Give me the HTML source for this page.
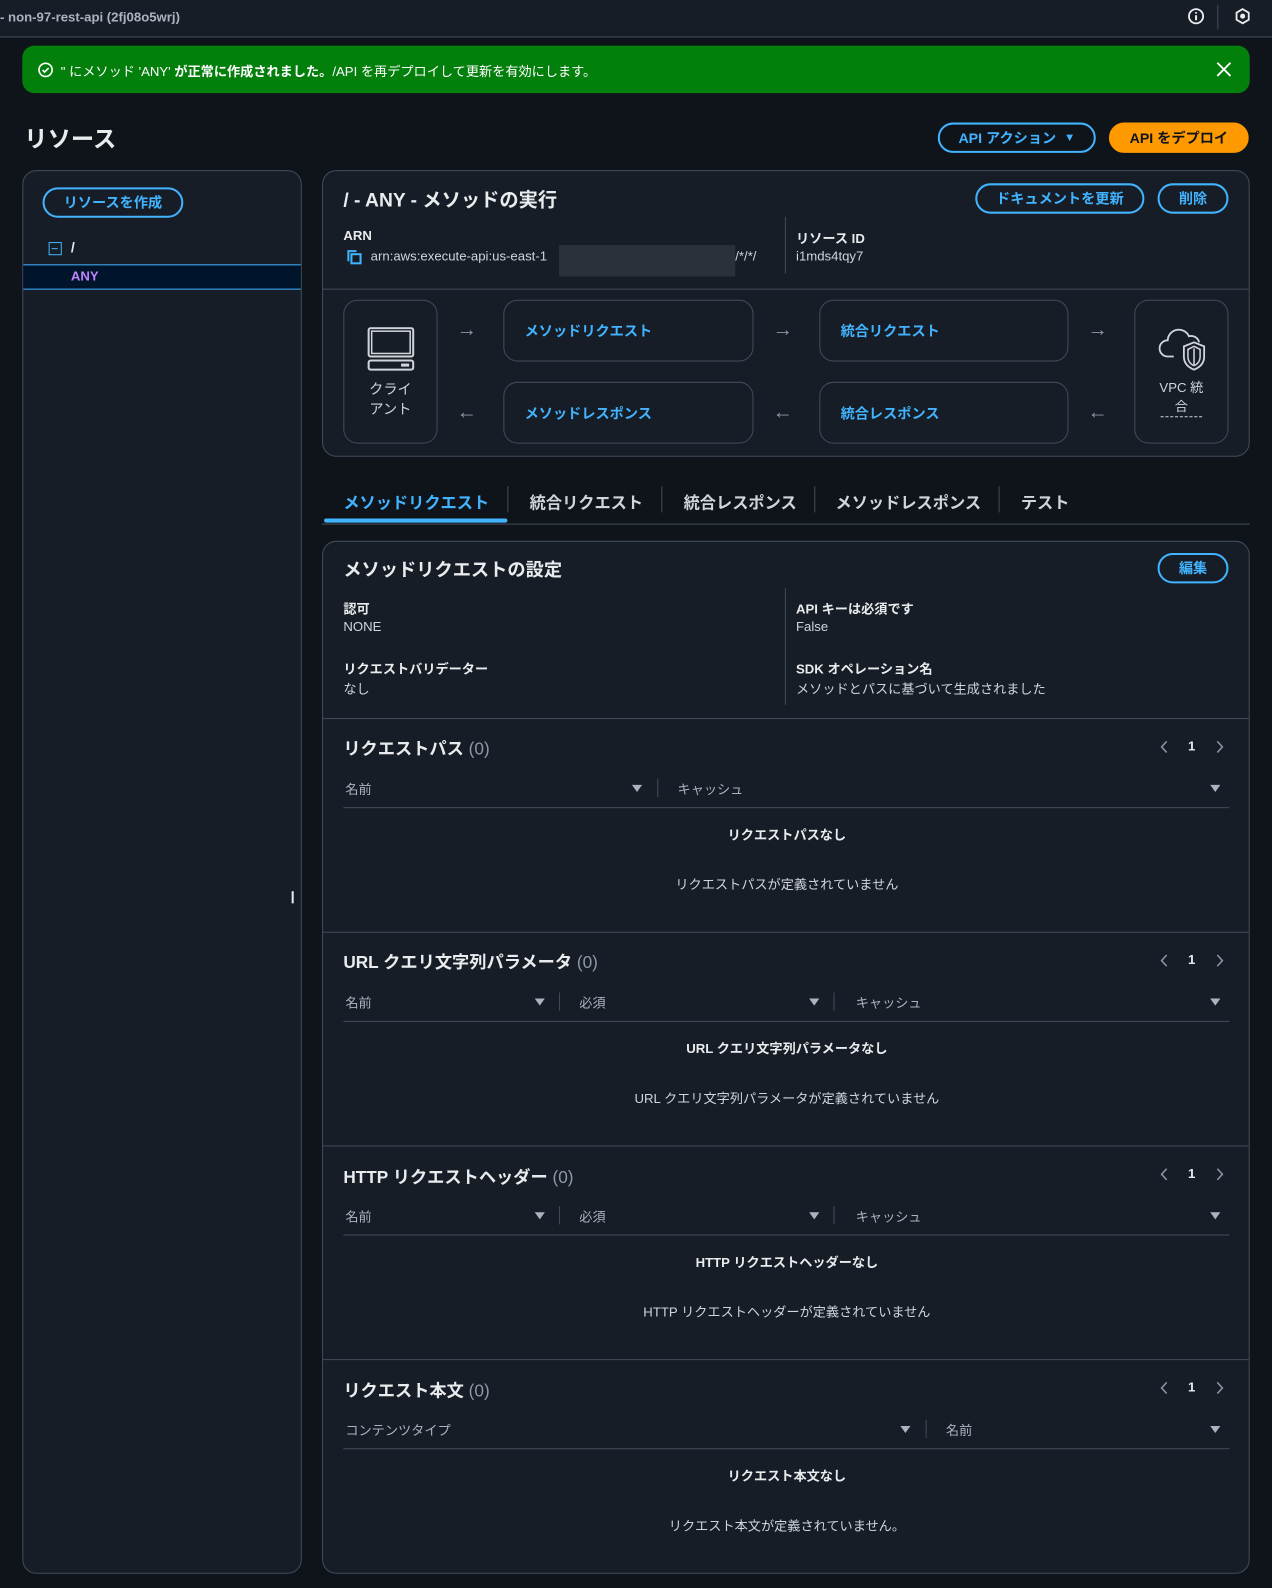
<!DOCTYPE html>
<html><head><meta charset="utf-8"><style>
*{box-sizing:border-box;margin:0;padding:0}
html,body{width:1272px;height:1588px;overflow:hidden;background:#0f141a}
body{font-family:"Liberation Sans","Noto Sans CJK JP",sans-serif;color:#e9ebed}
#w{position:absolute;left:0;top:0;width:1256px;height:1568px;transform:scale(1.01274);transform-origin:0 0}
.a{position:absolute}
.box{position:absolute;border:1px solid #414d5c;border-radius:14px;background:#161d26}
.btn{position:absolute;border:2px solid #42b4ff;border-radius:16px;color:#42b4ff;font-weight:bold;font-size:14px;display:flex;align-items:center;justify-content:center}
.lbl{font-size:13px;font-weight:bold;color:#e9ebed}
.val{font-size:13px;color:#d1d5db}
.fb{position:absolute;border:1px solid #414d5c;border-radius:14px;display:flex;align-items:center;padding-left:20px;color:#42b4ff;font-weight:bold;font-size:14px}
.arr{position:absolute;color:#8d99a8;font-size:20px;line-height:20px}
.h2{position:absolute;font-size:17px;font-weight:bold}
.h2 span{color:#8d99a8;font-weight:normal}
.th{position:absolute;font-size:13px;color:#aab4c0}
.tri{position:absolute;width:0;height:0;border-left:5px solid transparent;border-right:5px solid transparent;border-top:7px solid #aab4c0}
.sep{position:absolute;width:1px;height:18px;background:#414d5c}
.hl{position:absolute;height:1px;background:#414d5c}
.ct{position:absolute;left:0;width:916px;text-align:center;font-size:13px}
.pn{position:absolute;font-size:13px;font-weight:bold}
</style></head><body><div id="w">
<div class="a" style="left:0;top:0;width:1256px;height:37px;background:#161d26;border-bottom:1px solid #414d5c"></div>
<div class="a" style="left:0;top:9px;font-size:13px;font-weight:bold;color:#aab4c0">- non-97-rest-api (2fj08o5wrj)</div>
<svg class="a" style="left:1172px;top:7px" width="18" height="18" viewBox="0 0 18 18"><circle cx="9" cy="9" r="7" fill="none" stroke="#e9ebed" stroke-width="1.8"/><path d="M9 8v5M9 5v1.5" stroke="#e9ebed" stroke-width="2"/></svg>
<div class="a" style="left:1202px;top:5px;width:1px;height:24px;background:#414d5c"></div>
<svg class="a" style="left:1218px;top:7px" width="18" height="18" viewBox="0 0 18 18"><path d="M9 2l6 3.5v7L9 16l-6-3.5v-7z" fill="none" stroke="#e9ebed" stroke-width="1.8"/><circle cx="9" cy="9" r="2.5" fill="#e9ebed"/></svg>
<div class="a" style="left:22px;top:45px;width:1212px;height:47px;background:#037f0c;border-radius:12px"></div>
<svg class="a" style="left:37px;top:61px" width="16" height="16" viewBox="0 0 16 16"><circle cx="8" cy="8" r="6.5" fill="none" stroke="#fff" stroke-width="1.6"/><path d="M5 8.2l2 2 4-4" fill="none" stroke="#fff" stroke-width="1.6"/></svg>
<div class="a" style="left:60px;top:60px;font-size:13px;color:#fff">" にメソッド 'ANY' <b>が正常に作成されました。</b>/API を再デプロイして更新を有効にします。</div>
<svg class="a" style="left:1201px;top:61px" width="15" height="15" viewBox="0 0 15 15"><path d="M1 1l13 13M14 1L1 14" stroke="#fff" stroke-width="1.8"/></svg>
<div class="a" style="left:24px;top:118px;font-size:23px;font-weight:bold">リソース</div>
<div class="btn" style="left:926px;top:121px;width:156px;height:30px">API アクション&nbsp;&nbsp;<span style="font-size:11px">▼</span></div>
<div class="btn" style="left:1095px;top:121px;width:138px;height:30px;background:#ff9900;border-color:#ff9900;color:#0f141a">API をデプロイ</div>
<div class="box" style="left:22px;top:168px;width:276px;height:1386px"></div>
<div class="btn" style="left:42px;top:185px;width:139px;height:30px">リソースを作成</div>
<div class="a" style="left:48px;top:239px;width:13px;height:13px;border:1.5px solid #42b4ff"><div style="position:absolute;left:2px;top:4.5px;width:6px;height:1.5px;background:#42b4ff"></div></div>
<div class="a" style="left:70px;top:236px;font-size:14px;font-weight:bold">/</div>
<div class="a" style="left:23px;top:261px;width:274px;height:25px;background:#00142b;border-top:1px solid #42b4ff;border-bottom:1px solid #42b4ff"></div>
<div class="a" style="left:70px;top:265px;font-size:13px;font-weight:bold;color:#c084fc">ANY</div>
<div class="a" style="left:288px;top:880px;width:2px;height:12px;background:#e9ebed"></div>

<div class="box" style="left:318px;top:168px;width:916px;height:283px"></div>
<div class="a" style="left:339px;top:183px;font-size:19px;font-weight:bold">/ - ANY - メソッドの実行</div>
<div class="btn" style="left:963px;top:181px;width:167px;height:30px">ドキュメントを更新</div>
<div class="btn" style="left:1143px;top:181px;width:70px;height:30px">削除</div>
<div class="a lbl" style="left:339px;top:225px">ARN</div>
<svg class="a" style="left:342px;top:246px" width="16" height="16" viewBox="0 0 16 16"><path d="M1 1h9v2H3v9H1z" fill="#42b4ff"/><rect x="5" y="5" width="9" height="9" fill="none" stroke="#42b4ff" stroke-width="2"/></svg>
<div class="a val" style="left:366px;top:245px">arn:aws:execute-api:us-east-1</div>
<div class="a" style="left:552px;top:242px;width:174px;height:31px;background:#2a313b"></div>
<div class="a val" style="left:726px;top:245px">/*/*/</div>
<div class="a" style="left:775px;top:214px;width:1px;height:56px;background:#414d5c"></div>
<div class="a lbl" style="left:786px;top:225px">リソース ID</div>
<div class="a val" style="left:786px;top:245px">i1mds4tqy7</div>
<div class="hl" style="left:319px;top:285px;width:914px"></div>
<div class="a" style="left:339px;top:296px;width:93px;height:142px;border:1px solid #414d5c;border-radius:14px"></div>
<svg class="a" style="left:362px;top:323px" width="48" height="44" viewBox="0 0 48 44"><rect x="2" y="1" width="44" height="28" rx="2" fill="none" stroke="#d1d5db" stroke-width="2"/><rect x="5" y="4" width="38" height="22" fill="none" stroke="#d1d5db" stroke-width="1.5"/><rect x="2" y="33" width="44" height="9" rx="2" fill="none" stroke="#d1d5db" stroke-width="2"/><rect x="34" y="36" width="8" height="3" fill="#d1d5db"/></svg>
<div class="a" style="left:339px;top:374px;width:93px;text-align:center;font-size:14px;line-height:20px;color:#d1d5db">クライ<br>アント</div>
<div class="fb" style="left:497px;top:296px;width:247px;height:61px">メソッドリクエスト</div>
<div class="fb" style="left:497px;top:377px;width:247px;height:61px">メソッドレスポンス</div>
<div class="fb" style="left:809px;top:296px;width:246px;height:61px">統合リクエスト</div>
<div class="fb" style="left:809px;top:377px;width:246px;height:61px">統合レスポンス</div>
<div class="a" style="left:1120px;top:296px;width:93px;height:142px;border:1px solid #414d5c;border-radius:14px"></div>
<svg class="a" style="left:1143px;top:322px" width="48" height="44" viewBox="0 0 48 44"><path d="M16 30H10a8 8 0 0 1 0-16 11 11 0 0 1 21-4 8 8 0 0 1 10 6" fill="none" stroke="#d1d5db" stroke-width="1.8"/><path d="M36 16l10 4v10c0 7-5 11-10 13-5-2-10-6-10-13V20z" fill="none" stroke="#d1d5db" stroke-width="1.8"/><path d="M36 20l6 3v7c0 5-3 8-6 9-3-1-6-4-6-9v-7z" fill="none" stroke="#d1d5db" stroke-width="1.5"/><path d="M36 22v16" stroke="#d1d5db" stroke-width="1.5"/></svg>
<div class="a" style="left:1120px;top:373px;width:93px;text-align:center;font-size:13px;line-height:19px;color:#d1d5db">VPC 統<br><span style="border-bottom:1px dashed #d1d5db;padding:0 14px 2px">合</span></div>
<div class="arr" style="left:451px;top:316px">→</div><div class="arr" style="left:763px;top:316px">→</div><div class="arr" style="left:1074px;top:316px">→</div>
<div class="arr" style="left:451px;top:397px">←</div><div class="arr" style="left:763px;top:397px">←</div><div class="arr" style="left:1074px;top:397px">←</div>

<div class="a" style="left:339px;top:483px;font-size:16px;font-weight:bold;color:#42b4ff">メソッドリクエスト</div>
<div class="a" style="left:523px;top:483px;font-size:16px;font-weight:bold;color:#d1d5db">統合リクエスト</div>
<div class="a" style="left:675px;top:483px;font-size:16px;font-weight:bold;color:#d1d5db">統合レスポンス</div>
<div class="a" style="left:825px;top:483px;font-size:16px;font-weight:bold;color:#d1d5db">メソッドレスポンス</div>
<div class="a" style="left:1008px;top:483px;font-size:16px;font-weight:bold;color:#d1d5db">テスト</div>
<div class="a" style="left:501px;top:480px;width:1px;height:26px;background:#414d5c"></div>
<div class="a" style="left:653px;top:480px;width:1px;height:26px;background:#414d5c"></div>
<div class="a" style="left:804px;top:480px;width:1px;height:26px;background:#414d5c"></div>
<div class="a" style="left:986px;top:480px;width:1px;height:26px;background:#414d5c"></div>
<div class="hl" style="left:318px;top:517px;width:916px"></div>
<div class="a" style="left:320px;top:512px;width:181px;height:4px;background:#42b4ff;border-radius:2px"></div>

<div class="box" style="left:318px;top:534px;width:916px;height:1020px">
<div class="a" style="left:20px;top:14px;font-size:18px;font-weight:bold">メソッドリクエストの設定</div>
<div class="btn" style="left:824px;top:11px;width:70px;height:30px">編集</div>
<div class="a lbl" style="left:20px;top:56px">認可</div><div class="a val" style="left:20px;top:76px">NONE</div>
<div class="a lbl" style="left:20px;top:115px">リクエストバリデーター</div><div class="a val" style="left:20px;top:135px">なし</div>
<div class="a" style="left:456px;top:46px;width:1px;height:115px;background:#414d5c"></div>
<div class="a lbl" style="left:467px;top:56px">API キーは必須です</div><div class="a val" style="left:467px;top:76px">False</div>
<div class="a lbl" style="left:467px;top:115px">SDK オペレーション名</div><div class="a val" style="left:467px;top:135px">メソッドとパスに基づいて生成されました</div>
<div class="hl" style="left:0;top:174px;width:914px"></div>

<div class="h2" style="left:20px;top:190px">リクエストパス <span>(0)</span></div>
<svg class="a" style="left:826px;top:196px" width="10" height="13" viewBox="0 0 10 13"><path d="M7 1L2 6.5 7 12" fill="none" stroke="#8d99a8" stroke-width="1.5"/></svg><div class="pn" style="left:854px;top:194px">1</div><svg class="a" style="left:880px;top:196px" width="10" height="13" viewBox="0 0 10 13"><path d="M3 1l5 5.5L3 12" fill="none" stroke="#8d99a8" stroke-width="1.5"/></svg>
<div class="th" style="left:22px;top:234px">名前</div><div class="tri" style="left:305px;top:240px"></div><div class="sep" style="left:330px;top:234px"></div>
<div class="th" style="left:350px;top:234px">キャッシュ</div><div class="tri" style="left:876px;top:240px"></div>
<div class="hl" style="left:20px;top:262px;width:875px"></div>
<div class="ct" style="top:279px;font-weight:bold">リクエストパスなし</div>
<div class="ct" style="top:328px;color:#d1d5db">リクエストパスが定義されていません</div>
<div class="hl" style="left:0;top:385px;width:914px"></div>

<div class="h2" style="left:20px;top:401px">URL クエリ文字列パラメータ <span>(0)</span></div>
<svg class="a" style="left:826px;top:407px" width="10" height="13" viewBox="0 0 10 13"><path d="M7 1L2 6.5 7 12" fill="none" stroke="#8d99a8" stroke-width="1.5"/></svg><div class="pn" style="left:854px;top:405px">1</div><svg class="a" style="left:880px;top:407px" width="10" height="13" viewBox="0 0 10 13"><path d="M3 1l5 5.5L3 12" fill="none" stroke="#8d99a8" stroke-width="1.5"/></svg>
<div class="th" style="left:22px;top:445px">名前</div><div class="tri" style="left:209px;top:451px"></div><div class="sep" style="left:233px;top:445px"></div>
<div class="th" style="left:253px;top:445px">必須</div><div class="tri" style="left:480px;top:451px"></div><div class="sep" style="left:504px;top:445px"></div>
<div class="th" style="left:526px;top:445px">キャッシュ</div><div class="tri" style="left:876px;top:451px"></div>
<div class="hl" style="left:20px;top:473px;width:875px"></div>
<div class="ct" style="top:490px;font-weight:bold">URL クエリ文字列パラメータなし</div>
<div class="ct" style="top:539px;color:#d1d5db">URL クエリ文字列パラメータが定義されていません</div>
<div class="hl" style="left:0;top:596px;width:914px"></div>

<div class="h2" style="left:20px;top:613px">HTTP リクエストヘッダー <span>(0)</span></div>
<svg class="a" style="left:826px;top:618px" width="10" height="13" viewBox="0 0 10 13"><path d="M7 1L2 6.5 7 12" fill="none" stroke="#8d99a8" stroke-width="1.5"/></svg><div class="pn" style="left:854px;top:616px">1</div><svg class="a" style="left:880px;top:618px" width="10" height="13" viewBox="0 0 10 13"><path d="M3 1l5 5.5L3 12" fill="none" stroke="#8d99a8" stroke-width="1.5"/></svg>
<div class="th" style="left:22px;top:656px">名前</div><div class="tri" style="left:209px;top:662px"></div><div class="sep" style="left:233px;top:656px"></div>
<div class="th" style="left:253px;top:656px">必須</div><div class="tri" style="left:480px;top:662px"></div><div class="sep" style="left:504px;top:656px"></div>
<div class="th" style="left:526px;top:656px">キャッシュ</div><div class="tri" style="left:876px;top:662px"></div>
<div class="hl" style="left:20px;top:684px;width:875px"></div>
<div class="ct" style="top:701px;font-weight:bold">HTTP リクエストヘッダーなし</div>
<div class="ct" style="top:750px;color:#d1d5db">HTTP リクエストヘッダーが定義されていません</div>
<div class="hl" style="left:0;top:807px;width:914px"></div>

<div class="h2" style="left:20px;top:824px">リクエスト本文 <span>(0)</span></div>
<svg class="a" style="left:826px;top:829px" width="10" height="13" viewBox="0 0 10 13"><path d="M7 1L2 6.5 7 12" fill="none" stroke="#8d99a8" stroke-width="1.5"/></svg><div class="pn" style="left:854px;top:827px">1</div><svg class="a" style="left:880px;top:829px" width="10" height="13" viewBox="0 0 10 13"><path d="M3 1l5 5.5L3 12" fill="none" stroke="#8d99a8" stroke-width="1.5"/></svg>
<div class="th" style="left:22px;top:867px">コンテンツタイプ</div><div class="tri" style="left:570px;top:873px"></div><div class="sep" style="left:595px;top:867px"></div>
<div class="th" style="left:615px;top:867px">名前</div><div class="tri" style="left:876px;top:873px"></div>
<div class="hl" style="left:20px;top:895px;width:875px"></div>
<div class="ct" style="top:912px;font-weight:bold">リクエスト本文なし</div>
<div class="ct" style="top:961px;color:#d1d5db">リクエスト本文が定義されていません。</div>
</div>
</div></body></html>
